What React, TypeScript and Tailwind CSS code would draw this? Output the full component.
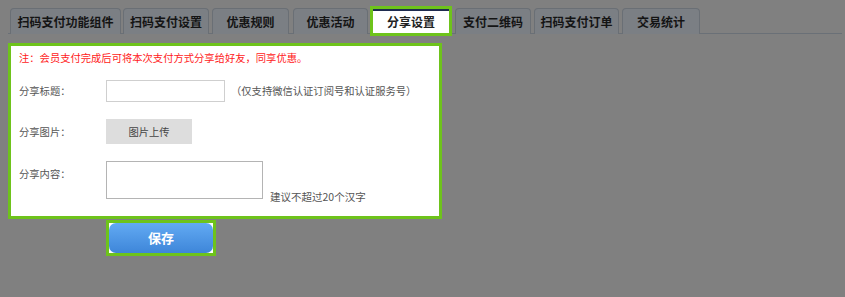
import React from "react";

const font = { fontFamily: '"Noto Sans CJK SC", "Liberation Sans", sans-serif' };

type Tab = { label: string; w: string; ml: string };

const tabs: Tab[] = [
  { label: "扫码支付功能组件", w: "w-[111px]", ml: "ml-[2px]" },
  { label: "扫码支付设置", w: "w-[86px]", ml: "ml-[2px]" },
  { label: "优惠规则", w: "w-[77px]", ml: "ml-[3px]" },
  { label: "优惠活动", w: "w-[75px]", ml: "ml-[4px]" },
];
const tabsAfter: Tab[] = [
  { label: "支付二维码", w: "w-[76px]", ml: "ml-[3px]" },
  { label: "扫码支付订单", w: "w-[85px]", ml: "ml-[3px]" },
  { label: "交易统计", w: "w-[78px]", ml: "ml-[3px]" },
];

function TabItem({ t }: { t: Tab }) {
  return (
    <div
      className={`${t.w} ${t.ml} mt-[2px] h-[26px] shrink-0 rounded-t-[4px] border border-b-0 border-[#6a6f75] bg-[#7b7f84] flex items-center justify-center text-[12px] font-bold text-[#141414]`}
    >
      {t.label}
    </div>
  );
}

export default function App() {
  return (
    <div className="w-[845px] h-[297px] bg-[#808080] overflow-hidden" style={font}>
      {/* tabs */}
      <div className="pt-[6px]">
        <div className="flex items-start h-[28px] w-[834px] ml-[8px] border-b border-[#6a7077]">
          {tabs.map((t) => (
            <TabItem key={t.label} t={t} />
          ))}
          <div className="ml-[2px] w-[82px] h-[30px] shrink-0 relative z-10 border-[3px] border-[#6ec31b] bg-white">
            <div className="h-full border-t-2 border-[#1e2b4f] flex items-center justify-center text-[12px] font-bold text-[#222] pb-[1px]">
              分享设置
            </div>
          </div>
          {tabsAfter.map((t) => (
            <TabItem key={t.label} t={t} />
          ))}
        </div>
      </div>

      {/* panel */}
      <div className="ml-[8px] mt-[9px] w-[434px] h-[176px] border-[3px] border-[#6ec31b] bg-white pl-[8px] pt-[6px] text-[10.3px] text-[#555]">
        <div className="h-[12px] leading-[12px] text-[#ff1a1a]">
          注：会员支付完成后可将本次支付方式分享给好友，同享优惠。
        </div>
        <div className="mt-[16px] flex items-center h-[22px]">
          <div className="w-[87px] shrink-0">分享标题：</div>
          <div className="w-[119px] h-[22px] border border-[#cfcfcf] bg-white shrink-0" />
          <div className="ml-[6px] whitespace-nowrap">（仅支持微信认证订阅号和认证服务号）</div>
        </div>
        <div className="mt-[17px] flex items-center h-[25px]">
          <div className="w-[87px] shrink-0">分享图片：</div>
          <div className="w-[86px] h-[25px] bg-[#dddddd] flex items-center justify-center text-[#444] shrink-0">
            图片上传
          </div>
        </div>
        <div className="mt-[17px] flex items-start">
          <div className="w-[87px] shrink-0 mt-[5px]">分享内容：</div>
          <div className="w-[157px] h-[38px] border border-[#b4b4b4] bg-white shrink-0" />
          <div className="ml-[7px] mt-[28px] whitespace-nowrap text-[10.5px]">建议不超过20个汉字</div>
        </div>
      </div>

      {/* save */}
      <div className="ml-[106px] mt-[1px] w-[110px] h-[36px] border-[3px] border-[#6ec31b] bg-white">
        <div className="w-full h-full rounded-[7px] bg-gradient-to-b from-[#62aaf3] to-[#3e86d9] flex items-center justify-center text-white text-[13px] font-bold">
          保存
        </div>
      </div>
    </div>
  );
}
